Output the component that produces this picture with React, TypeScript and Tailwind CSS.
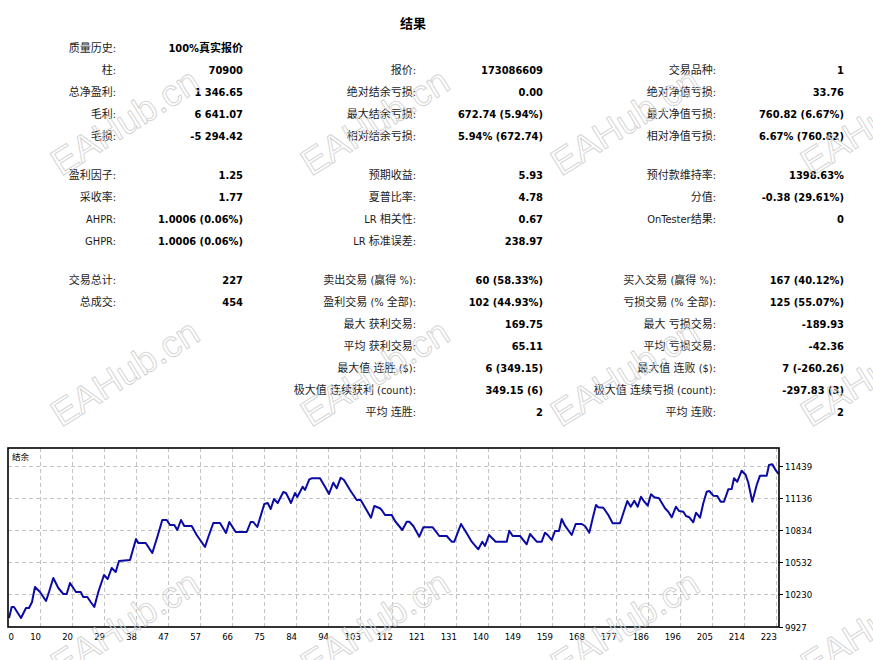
import React from "react";

type Pair = [string, string] | null;
type Row = [Pair, Pair, Pair];

const sec1: Row[] = [
  [["质量历史:", "100%真实报价"], null, null],
  [["柱:", "70900"], ["报价:", "173086609"], ["交易品种:", "1"]],
  [["总净盈利:", "1 346.65"], ["绝对结余亏损:", "0.00"], ["绝对净值亏损:", "33.76"]],
  [["毛利:", "6 641.07"], ["最大结余亏损:", "672.74 (5.94%)"], ["最大净值亏损:", "760.82 (6.67%)"]],
  [["毛损:", "-5 294.42"], ["相对结余亏损:", "5.94% (672.74)"], ["相对净值亏损:", "6.67% (760.82)"]],
];
const sec2: Row[] = [
  [["盈利因子:", "1.25"], ["预期收益:", "5.93"], ["预付款维持率:", "1398.63%"]],
  [["采收率:", "1.77"], ["夏普比率:", "4.78"], ["分值:", "-0.38 (29.61%)"]],
  [["AHPR:", "1.0006 (0.06%)"], ["LR 相关性:", "0.67"], ["OnTester结果:", "0"]],
  [["GHPR:", "1.0006 (0.06%)"], ["LR 标准误差:", "238.97"], null],
];
const sec3: Row[] = [
  [["交易总计:", "227"], ["卖出交易 (赢得 %):", "60 (58.33%)"], ["买入交易 (赢得 %):", "167 (40.12%)"]],
  [["总成交:", "454"], ["盈利交易 (% 全部):", "102 (44.93%)"], ["亏损交易 (% 全部):", "125 (55.07%)"]],
  [null, ["最大 获利交易:", "169.75"], ["最大 亏损交易:", "-189.93"]],
  [null, ["平均 获利交易:", "65.11"], ["平均 亏损交易:", "-42.36"]],
  [null, ["最大值 连胜 ($):", "6 (349.15)"], ["最大值 连败 ($):", "7 (-260.26)"]],
  [null, ["极大值 连续获利 (count):", "349.15 (6)"], ["极大值 连续亏损 (count):", "-297.83 (3)"]],
  [null, ["平均 连胜:", "2"], ["平均 连败:", "2"]],
];

function Section({ rows }: { rows: Row[] }) {
  return (
    <div className="grid grid-cols-[116px_127px_173px_127px_173px_128px] auto-rows-[22px] items-center">
      {rows.map((r, i) =>
        r.map((p, j) => (
          <React.Fragment key={`${i}-${j}`}>
            <div className="text-right whitespace-nowrap text-[#1c1c1c]">{p ? p[0] : ""}</div>
            <div className="text-right whitespace-nowrap font-bold text-black">{p ? p[1] : ""}</div>
          </React.Fragment>
        ))
      )}
    </div>
  );
}

const pts =
  "9,618 11.7,607 14,607 21,618 26,608 29,608 32,602 35,587 40,592 46,601 49,592 53.3,578 58.3,588 63.3,594 66.7,594 70,583 76,592 80.7,592 83.3,597 87.3,597 90.7,602 94.3,607 98.3,592 104,575 107.7,579 111.7,568 115.7,572 119,561 130,560 136,539 138.3,543 145.7,543 152.3,553 157.3,537 162.3,520 166.7,520 170,525 174.3,525 177.3,530 181,520 184.3,526 191.7,526 196.7,535 205,547 208.3,537 213.3,523 220,523 226,533 229.3,522 235.7,532 246.7,532 250.7,522 253.3,522 257.3,527 264.3,504 267.7,503 270.7,509 274,499 277.7,503 283.3,492 286,493 291,503 295,493 297.3,497 302.7,486.7 305,490 309.3,479.3 311.7,478.3 320,478.3 325,486.7 329,494 333.3,482.7 336.7,488.3 340.7,477.7 344,480 350,490 356.7,500 360.7,500 371,517.7 374.3,506 380,508.3 381.7,510 385,515 391.7,515 395,521 402.3,530 406.7,521.7 409.3,521.7 413.3,526 419.3,536.7 423.3,527.3 432.7,527.3 439.3,536 446.7,536 451.7,541.7 454.3,541.7 461,524 466.7,533.3 471.7,541.7 478.3,549.3 482.3,541.7 485,546 489,535 495.7,541.7 506.7,541.7 509.3,530.7 512.7,536 520,536 526.7,544.3 530,534 536.7,541.7 541.7,541.7 545,532.7 547.7,535 551.7,540 555,531 559,531 561.7,519 565,525.7 571.7,535 575.7,524 581.7,524 585,526 589.3,532.7 592.7,518.3 596,505 598.3,507.3 603.3,507.7 608.3,515 612.7,523.3 620,523.3 623.3,513.3 627.3,501 630.7,506.7 634.3,500.7 637.7,506.7 641,496.7 644.3,501.7 647.7,505.7 651,494.3 654.3,497.3 659,498.3 665,508.3 668.3,511.7 671.7,517.3 676,506.7 679,511 683.3,511.7 686,516 689.3,517.3 693.3,522.3 696,512.7 700,517.7 703.3,503.3 706.7,491.7 709.3,491 713.3,495.7 717.3,496 720.7,501.7 724,501.7 728.3,489.3 731.7,489 734,478.3 737.3,481.7 741.7,470.7 745.7,475 748.3,482.7 752.3,501.7 756.7,485 760,475.7 766.7,475.7 769,465 772.3,464.3 776,470.7 778.7,474";

const xLabels = ["10", "20", "29", "38", "47", "57", "66", "75", "84", "94", "103", "112", "121", "131", "140", "149", "159", "168", "177", "186", "196", "205", "214", "223"];
const yLabels: [string, number][] = [
  ["11439", 466],
  ["11136", 498],
  ["10834", 530],
  ["10532", 562],
  ["10230", 594],
  ["9927", 627],
];

const FONT = 'Tahoma, "DejaVu Sans Condensed", "DejaVu Sans", "Noto Sans CJK SC", sans-serif';

function Chart() {
  const hLines = [466, 498, 530, 562, 594];
  const vLines = xLabels.map((_, k) => 40 + 32 * k);
  return (
    <svg width="873" height="220" viewBox="0 440 873 220" className="block" style={{ fontFamily: FONT }}>
      <rect x="8" y="448" width="771" height="179" fill="#fff" />
      {hLines.map((y) => (
        <line key={y} x1="8" x2="779" y1={y + 0.5} y2={y + 0.5} stroke="#c4c4c4" strokeDasharray="4 3" />
      ))}
      {vLines.map((x) => (
        <line key={x} x1={x + 0.5} x2={x + 0.5} y1="448" y2="627" stroke="#c4c4c4" strokeDasharray="4 3" />
      ))}
      <polyline points={pts} fill="none" stroke="#0a0aa5" strokeWidth="2" strokeLinejoin="round" />
      <rect x="8" y="448" width="771" height="179" fill="none" stroke="#000" strokeWidth="1.6" />
      {yLabels.map(([t, y]) => (
        <g key={t}>
          <line x1="779" x2="783" y1={y + 0.5} y2={y + 0.5} stroke="#000" />
          <text x="785" y={y + 3.5} fontSize="9.5" fill="#000">
            {t}
          </text>
        </g>
      ))}
      <text x="8.5" y="640" fontSize="9.5" fill="#000">
        0
      </text>
      {xLabels.map((t, k) => (
        <text key={t} x={41 + 32 * k} y="640" fontSize="9.5" fill="#000" textAnchor="end">
          {t}
        </text>
      ))}
      <text x="12" y="460" fontSize="8.5" fill="#000" style={{ fontFamily: '"Noto Sans CJK SC", sans-serif' }}>
        结余
      </text>
    </svg>
  );
}

function Watermarks() {
  const cs: [number, number][] = [];
  for (const y of [122, 373, 624]) for (const x of [125, 375, 625, 875]) cs.push([x, y]);
  return (
    <svg width="873" height="660" className="absolute left-0 top-0 pointer-events-none">
      {cs.map(([x, y]) => (
        <text
          key={`${x}-${y}`}
          x={x}
          y={y}
          fontSize="37"
          textAnchor="middle"
          dominantBaseline="central"
          fill="none"
          stroke="#d2d2d2"
          strokeWidth="0.9"
          transform={`rotate(-32 ${x} ${y})`}
          style={{ fontFamily: '"Liberation Sans", Arial, sans-serif' }}
        >
          EAHub.cn
        </text>
      ))}
    </svg>
  );
}

export default function App() {
  return (
    <div
      className="relative w-[873px] h-[660px] overflow-hidden bg-white text-[11px] leading-[14px] [font-stretch:condensed]"
      style={{ fontFamily: FONT }}
    >
      <div className="w-[826px] h-[38px] pt-[14px] text-center text-[13px] leading-[20px] font-bold text-black">结果</div>
      <Section rows={sec1} />
      <div className="h-[17px]" />
      <Section rows={sec2} />
      <div className="h-[17px]" />
      <Section rows={sec3} />
      <div className="h-[16px]" />
      <Chart />
      <Watermarks />
    </div>
  );
}
